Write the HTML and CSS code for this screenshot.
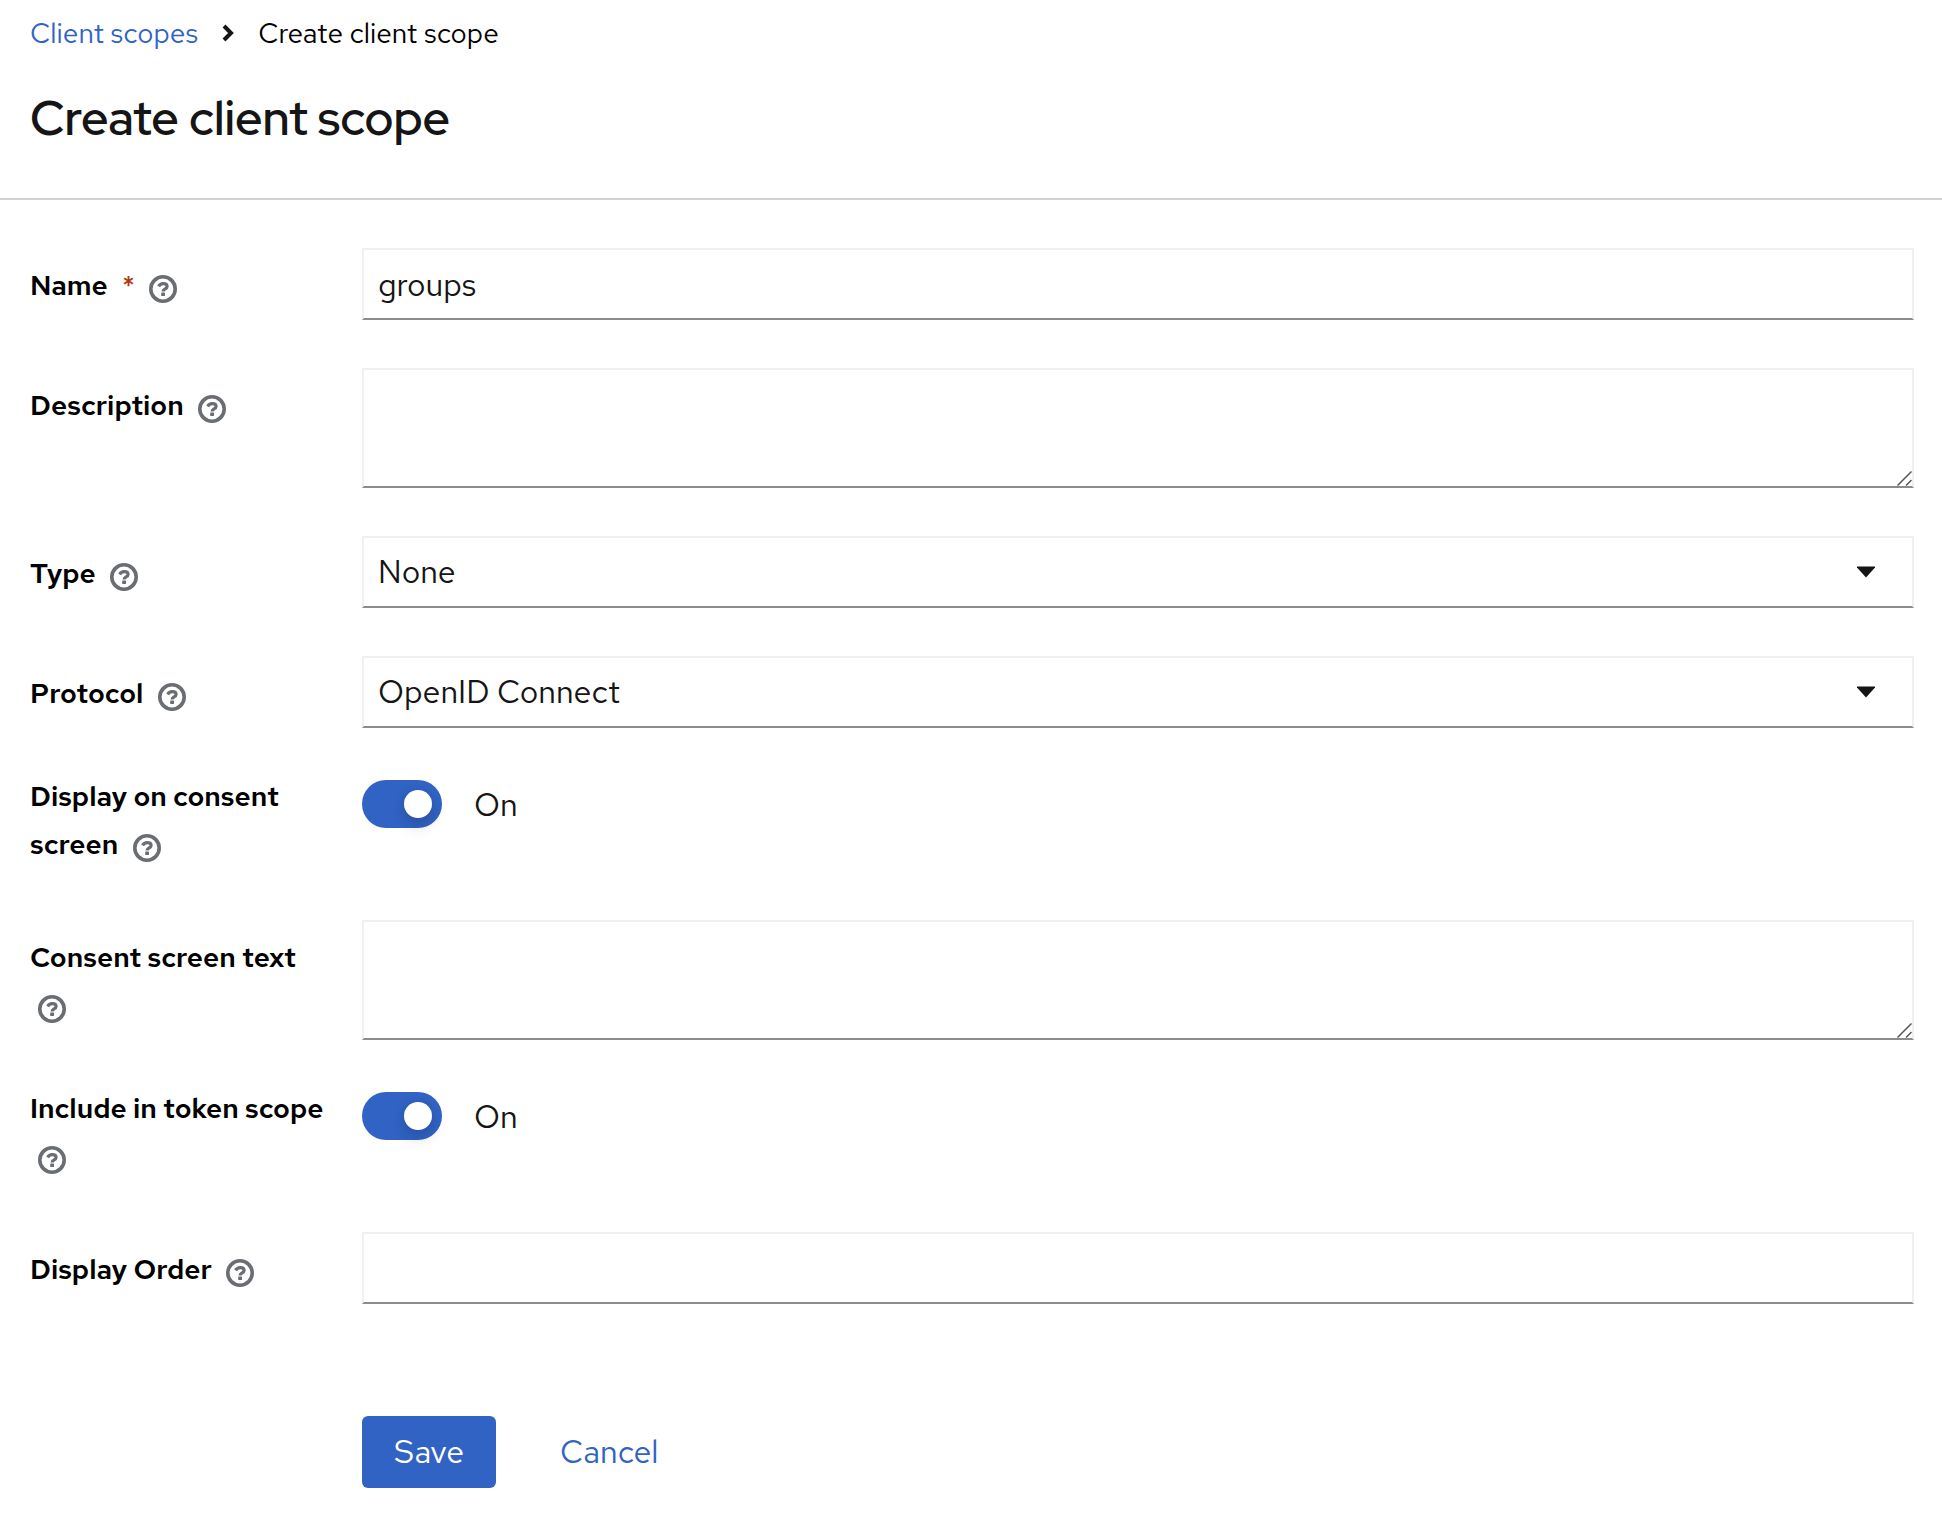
FILE: index.html
```html
<!DOCTYPE html>
<html lang="en">
<head>
<meta charset="UTF-8">
<title>Create client scope</title>
<meta name="viewport" content="width=device-width, initial-scale=1.0">
<link rel="stylesheet" href="styles.css">
</head>
<body>
<!-- shared help icon -->
<svg class="defs" width="0" height="0" aria-hidden="true">
    <symbol id="help" viewBox="0 0 28 28">
        <circle cx="14" cy="14" r="12.2" fill="none" stroke="currentColor" stroke-width="3.6"/>
        <path d="M9.6 11.4C10.6 9.6 12 8.7 14.2 8.7c2.2 0 3.9 1.1 3.9 2.8 0 2.5-4 2.2-4 4.900" fill="none" stroke="currentColor" stroke-width="3.2"/>
        <rect x="12.2" y="17.500" width="3.800" height="3.600" rx=".6" fill="currentColor"/>
    </symbol>
</svg>

<header class="page-header">
    <nav class="breadcrumb" aria-label="Breadcrumb">
        <a href="#">Client scopes</a>
        <svg class="chevron" viewBox="0 0 12 18" aria-hidden="true"><path d="M2 2l7 7-7 7" fill="none" stroke="currentColor" stroke-width="4"/></svg>
        <span>Create client scope</span>
    </nav>
    <h1>Create client scope</h1>
</header>

<form class="form" autocomplete="off">
    <div class="row">
        <div class="label">
            <label for="name">Name <span class="required">*</span></label>
            <button type="button" class="help" aria-label="Help for name"><svg><use href="#help"/></svg></button>
        </div>
        <input class="control" type="text" id="name" value="groups" required>
    </div>
    <div class="row">
        <div class="label">
            <label for="description">Description</label>
            <button type="button" class="help" aria-label="Help for description"><svg><use href="#help"/></svg></button>
        </div>
        <textarea class="control" id="description"></textarea>
    </div>
    <div class="row">
        <div class="label">
            <label for="type">Type</label>
            <button type="button" class="help" aria-label="Help for type"><svg><use href="#help"/></svg></button>
        </div>
        <select class="control" id="type">
            <option>None</option>
            <option>Default</option>
            <option>Optional</option>
        </select>
    </div>
    <div class="row">
        <div class="label">
            <label for="protocol">Protocol</label>
            <button type="button" class="help" aria-label="Help for protocol"><svg><use href="#help"/></svg></button>
        </div>
        <select class="control" id="protocol">
            <option>OpenID Connect</option>
            <option>SAML</option>
        </select>
    </div>
    <div class="row row-switch">
        <div class="label">
            <label for="displayConsent">Display on consent screen</label>
            <button type="button" class="help" aria-label="Help for display on consent screen"><svg><use href="#help"/></svg></button>
        </div>
        <div class="switch">
            <input type="checkbox" id="displayConsent" checked>
            <label for="displayConsent">On</label>
        </div>
    </div>
    <div class="row">
        <div class="label">
            <label for="consentText">Consent screen text</label>
            <button type="button" class="help" aria-label="Help for consent screen text"><svg><use href="#help"/></svg></button>
        </div>
        <textarea class="control" id="consentText"></textarea>
    </div>
    <div class="row row-switch">
        <div class="label">
            <label for="tokenScope">Include in token scope</label>
            <button type="button" class="help" aria-label="Help for include in token scope"><svg><use href="#help"/></svg></button>
        </div>
        <div class="switch">
            <input type="checkbox" id="tokenScope" checked>
            <label for="tokenScope">On</label>
        </div>
    </div>
    <div class="row">
        <div class="label">
            <label for="displayOrder">Display Order</label>
            <button type="button" class="help" aria-label="Help for display order"><svg><use href="#help"/></svg></button>
        </div>
        <input class="control" type="text" id="displayOrder">
    </div>
    <div class="actions">
        <button type="submit" class="btn btn-primary">Save</button>
        <a href="#" class="btn btn-link">Cancel</a>
    </div>
</form>
</body>
</html>
```
FILE: styles.css
```css
*{box-sizing:border-box}
body{margin:0;background:#fff;color:#151515;font-family:"Red Hat Text",Inter,"Liberation Sans",sans-serif;font-size:32px}
a{color:#3163c5;text-decoration:none}
.defs{display:block;width:0;height:0}

.page-header{padding:12px 30px 48px;border-bottom:2px solid #d2d2d2}
.breadcrumb{display:flex;align-items:center;gap:24px;color:#000;font-size:28px;line-height:42px}
.chevron{width:12px;height:18px;color:#151515}
h1{margin:32px 0 0;font-family:"Red Hat Display",Inter,"Liberation Sans",sans-serif;font-size:48px;font-weight:600;line-height:64px}

.form{display:flex;flex-direction:column;gap:48px;padding:48px 28px 30px 30px}
.row{display:grid;grid-template-columns:300px 1fr;column-gap:32px;align-items:start}
.label{padding-top:13px;color:#000;font-size:28px;font-weight:600;line-height:48px}
.required{margin-left:8px;color:#b1380b;font-weight:500}
.help{width:44px;height:28px;padding:0 8px;border:0;background:none;color:#6a6e73;vertical-align:-8px;line-height:0;cursor:pointer}
.help svg{display:block;width:28px;height:28px}

.control{display:block;width:100%;height:72px;padding:0 14px;border:2px solid #f0f0f0;border-bottom-color:#8a8d90;border-radius:0;background:#fff;color:#151515;font:inherit;line-height:48px}
textarea.control{height:120px;resize:vertical}
textarea.control::-webkit-resizer{background:url("data:image/svg+xml,%3Csvg xmlns='http://www.w3.org/2000/svg' width='15' height='15'%3E%3Cpath d='M.5 14.5l14-14M9 14.5L14.5 9' fill='none' stroke='%23555' stroke-width='1.5'/%3E%3C/svg%3E") no-repeat right bottom}
select.control{appearance:none;background:#fff url("data:image/svg+xml,%3Csvg xmlns='http://www.w3.org/2000/svg' width='20' height='12'%3E%3Cpath d='M1 .5h18v1L10 11.500 1 1.500z' fill='%23151515'/%3E%3C/svg%3E") no-repeat right 36px center}

/* switch rows have no box, so the label sits higher */
.row-switch .label{margin-top:-4px;padding:0 0 4px}
.switch{display:flex;align-items:center;gap:32px;height:48px;margin-top:4px}
.switch input{appearance:none;width:80px;height:48px;margin:0;padding:10px;border-radius:24px;background:#8a8d90;cursor:pointer}
.switch input::before{content:"";display:block;width:28px;height:28px;border-radius:50%;background:#fff;box-shadow:0 8px 16px rgba(3,3,3,.16),0 0 6px rgba(3,3,3,.08)}
.switch input:checked{background:#3163c5}
.switch input:checked::before{margin-left:32px}

.actions{display:flex;gap:32px;margin:64px 0 0 332px}
.btn{height:72px;padding:0 32px;border:0;border-radius:6px;font:inherit;line-height:72px;cursor:pointer}
.btn-primary{background:#3163c5;color:#fff}
.btn-link{background:none}
```
